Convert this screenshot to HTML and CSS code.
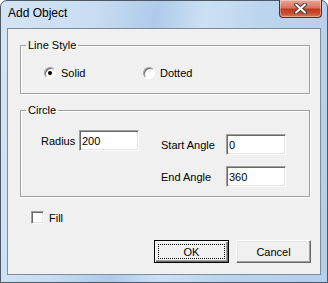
FILE: index.html
```html
<!DOCTYPE html>
<html lang="en">
<head>
  <meta charset="UTF-8" />
  <title>Add Object</title>
  <link rel="stylesheet" href="styles.css">
</head>
<body>
  <div class="window">
    <div class="titlebar">
      <div class="title">Add Object</div>
      <div class="close-btn">
        <svg width="13" height="11" viewBox="0 0 13 11">
          <path d="M2 1.5 L11 9.5 M11 1.5 L2 9.5" stroke="#3d3d3d" stroke-width="4" stroke-linecap="round" />
          <path d="M2 1.5 L11 9.5 M11 1.5 L2 9.5" stroke="#ffffff" stroke-width="2" stroke-linecap="round" />
        </svg>
      </div>
    </div>

    <div class="client">
      <fieldset class="group group-line">
        <legend>Line Style</legend>
        <div class="radio-row">
          <div class="radio-item solid">
            <span class="radio checked"></span>
            <span>Solid</span>
          </div>
          <div class="radio-item">
            <span class="radio"></span>
            <span>Dotted</span>
          </div>
        </div>
      </fieldset>

      <fieldset class="group group-circle">
        <legend>Circle</legend>
        <div class="circle-body">
          <div class="field">
            <label class="lbl-radius">Radius</label>
            <input class="textbox" value="200" />
          </div>
          <div class="angles">
            <div class="field">
              <label class="lbl-angle">Start Angle</label>
              <input class="textbox" value="0" />
            </div>
            <div class="field">
              <label class="lbl-angle">End Angle</label>
              <input class="textbox" value="360" />
            </div>
          </div>
        </div>
      </fieldset>

      <div class="check-row">
        <span class="checkbox"></span>
        <span>Fill</span>
      </div>

      <div class="buttons">
        <button class="btn btn-default">OK</button>
        <button class="btn">Cancel</button>
      </div>
    </div>
  </div>
</body>
</html>
```

FILE: styles.css
```css
body {
  margin: 0;
  background: #ffffff;
}

.window {
  width: 328px;
  height: 283px;
  box-sizing: border-box;
  border: 1px solid #4d5866;
  border-radius: 7px 7px 0 0;
  padding: 0 6px 7px 6px;
  display: flex;
  flex-direction: column;
  background: linear-gradient(100deg, #d4e4f4 0%, #c9ddf2 25%, #aecbea 42%, #cbe0f4 55%, #bcd5ee 70%, #b3cfec 100%);
}

.titlebar {
  height: 27px;
  display: flex;
  justify-content: space-between;
  align-items: flex-start;
}

.title {
  padding: 5px 0 0 1px;
  font-family: "Liberation Sans", Arial, sans-serif;
  font-size: 12px;
  line-height: 14px;
  color: #000;
}

.close-btn {
  width: 43px;
  height: 18px;
  margin: -1px -1px 0 0;
  box-sizing: border-box;
  border: 1px solid #5e2a22;
  border-top: none;
  border-radius: 0 0 4px 4px;
  background: linear-gradient(#e9a899 0%, #d9735d 45%, #c0391f 55%, #c9502f 80%, #dd7a5a 100%);
  box-shadow: inset 0 0 0 1px rgba(255, 255, 255, 0.35);
  display: flex;
  align-items: center;
  justify-content: center;
}

.client {
  height: 247px;
  box-sizing: border-box;
  border: 1px solid #7f8c9b;
  background: #f0f0f0;
  display: flex;
  flex-direction: column;
  font-family: "Liberation Sans", Arial, sans-serif;
  font-size: 11px;
  color: #000;
}

.group {
  margin: 0 10px 0 12px;
  padding: 0;
  border: 1px solid #a0a0a0;
  box-shadow: 1px 1px 0 #ffffff, inset 1px 1px 0 #ffffff;
  min-width: 0;
}

.group legend {
  margin-left: 5px;
  padding: 0 2px;
  line-height: 13px;
}

.group-line {
  margin-top: 10px;
}

.radio-row {
  display: flex;
  align-items: center;
  padding: 14px 0 14px 23px;
  height: 13px;
}

.radio-item {
  display: flex;
  align-items: center;
  gap: 5px;
}

.radio-item.solid {
  width: 99px;
}

.radio {
  width: 12px;
  height: 12px;
  box-sizing: border-box;
  border-radius: 50%;
  background: #fff;
  border: 1px solid;
  border-color: #a0a0a0 #ffffff #ffffff #a0a0a0;
  box-shadow: inset 1px 1px 0 #696969;
  display: flex;
  align-items: center;
  justify-content: center;
}

.radio.checked::after {
  content: "";
  width: 4px;
  height: 4px;
  border-radius: 50%;
  background: #000;
}

.group-circle {
  margin-top: 10px;
}

.circle-body {
  display: flex;
  align-items: flex-start;
  padding: 13px 0 9px 20px;
  gap: 22px;
}

.angles {
  display: flex;
  flex-direction: column;
  gap: 11px;
  padding-top: 4px;
}

.field {
  display: flex;
  align-items: center;
}

.lbl-radius {
  width: 38px;
}

.lbl-angle {
  width: 65px;
}

.textbox {
  width: 60px;
  height: 21px;
  box-sizing: border-box;
  margin: 0;
  padding: 0 0 0 2px;
  font-family: "Liberation Sans", Arial, sans-serif;
  font-size: 11px;
  color: #000;
  background: #fff;
  border: 1px solid;
  border-color: #a0a0a0 #ffffff #ffffff #a0a0a0;
  box-shadow: inset 1px 1px 0 #696969, inset -1px -1px 0 #e3e3e3;
  outline: none;
}

.check-row {
  display: flex;
  align-items: center;
  gap: 5px;
  margin: 14px 0 0 23px;
  height: 13px;
}

.checkbox {
  width: 13px;
  height: 13px;
  box-sizing: border-box;
  background: #fff;
  border: 1px solid;
  border-color: #a0a0a0 #ffffff #ffffff #a0a0a0;
  box-shadow: inset 1px 1px 0 #696969, inset -1px -1px 0 #e3e3e3;
}

.buttons {
  display: flex;
  justify-content: flex-end;
  gap: 7px;
  margin: 16px 9px 0 0;
}

.btn {
  position: relative;
  width: 75px;
  height: 23px;
  margin: 0;
  padding: 0;
  box-sizing: border-box;
  font-family: "Liberation Sans", Arial, sans-serif;
  font-size: 11px;
  color: #000;
  background: #f0f0f0;
  border: 1px solid;
  border-color: #ffffff #696969 #696969 #ffffff;
  box-shadow: inset -1px -1px 0 #a0a0a0, inset 1px 1px 0 #e3e3e3;
}

.btn-default {
  border: 1px solid #000;
  box-shadow: inset 1px 1px 0 #ffffff, inset -1px -1px 0 #696969, inset -2px -2px 0 #a0a0a0;
}

.btn-default::after {
  content: "";
  position: absolute;
  top: 3px;
  left: 3px;
  right: 3px;
  bottom: 3px;
  border: 1px dotted #000;
}
```
